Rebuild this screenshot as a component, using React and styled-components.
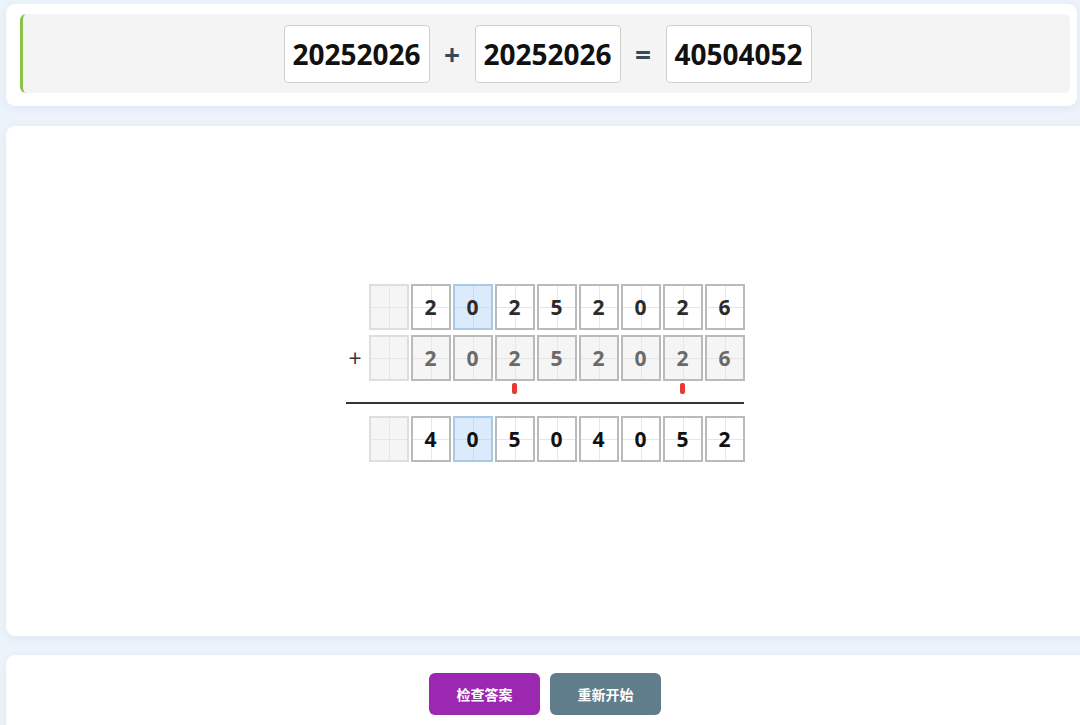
import React from "react";
import styled, { createGlobalStyle } from "styled-components";

const Global = createGlobalStyle`
  html, body { margin: 0; padding: 0; background: #edf3fb; }
  body { font-family: "Open Sans", "Noto Sans CJK SC", sans-serif; overflow: hidden; }
`;

const Page = styled.div`
  width: 1080px;
  height: 725px;
  overflow: hidden;
  padding: 4px 0 0 6px;
  box-sizing: border-box;
  display: flex;
  flex-direction: column;
`;

const Card = styled.section`
  background: #fff;
  border-radius: 9px;
  box-shadow: 0 2px 8px rgba(40, 70, 120, 0.07);
  box-sizing: border-box;
  flex-shrink: 0;
`;

const HeaderCard = styled(Card)`
  width: 1071px;
  padding: 10px 7px 13px 14px;
`;

const EquationPanel = styled.div`
  height: 79px;
  background: #f4f4f4;
  border-left: 3px solid #8bc34a;
  border-radius: 6px;
  display: flex;
  align-items: center;
  justify-content: center;
  gap: 13px;
  padding-left: 2px;
  box-sizing: border-box;
`;

const NumberBox = styled.div`
  width: 146px;
  height: 58px;
  box-sizing: border-box;
  background: #fff;
  border: 1px solid #cfcfcf;
  border-radius: 4px;
  display: flex;
  align-items: center;
  justify-content: center;
  font-size: 28px;
  font-weight: 700;
  color: #111;
`;

const Operator = styled.span`
  width: 19px;
  text-align: center;
  font-size: 28px;
  font-weight: 700;
  color: #34495e;
`;

const WorkCard = styled(Card)`
  margin-top: 20px;
  width: 1090px;
  height: 510px;
  display: flex;
  align-items: center;
  justify-content: center;
  padding: 0 12px 16px 0;
`;

const Vertical = styled.div`
  display: flex;
  flex-direction: column;
  align-items: flex-start;
`;

const Row = styled.div`
  display: flex;
  align-items: center;
  margin-top: ${(p) => p.$mt || 0}px;
`;

const Sign = styled.div`
  width: 23px;
  text-align: center;
  font-size: 23px;
  color: #333;
  padding-right: 4px;
  box-sizing: border-box;
`;

const Cells = styled.div`
  display: flex;
  gap: 2px;
`;

const Cell = styled.div`
  position: relative;
  width: 40px;
  height: 46px;
  box-sizing: border-box;
  border: 2px solid ${(p) => (p.$empty ? "#dedede" : p.$hl ? "#a9c9e6" : "#bababa")};
  background: ${(p) => (p.$hl ? "#dcebfb" : p.$shade ? "#f5f5f5" : "#fff")};
  display: flex;
  align-items: center;
  justify-content: center;
  font-size: 21px;
  font-weight: 700;
  color: ${(p) => p.$tone};
  &::before {
    content: "";
    position: absolute;
    left: 50%;
    top: 0;
    bottom: 0;
    width: 1px;
    background: ${(p) => (p.$hl ? "#c8dcf0" : "#e6e6e6")};
  }
  &::after {
    content: "";
    position: absolute;
    top: 50%;
    left: 0;
    right: 0;
    height: 1px;
    background: ${(p) => (p.$hl ? "#c8dcf0" : "#e6e6e6")};
  }
`;

const Digit = styled.span`
  position: relative;
  z-index: 1;
`;

const CarrySlot = styled.div`
  width: 40px;
  height: 14px;
  display: flex;
  justify-content: center;
  padding-top: 2px;
  box-sizing: border-box;
`;

const CarryMark = styled.div`
  width: 5px;
  height: 11px;
  border-radius: 2px;
  background: #e53935;
`;

const Rule = styled.div`
  width: 398px;
  height: 2px;
  background: #333;
  margin-top: 7px;
`;

const ActionCard = styled(Card)`
  margin-top: 19px;
  width: 1090px;
  height: 90px;
  display: flex;
  justify-content: center;
  gap: 10px;
  padding: 18px 12px 0 0;
`;

const Button = styled.button`
  width: 111px;
  height: 42px;
  border: none;
  border-radius: 6px;
  background: ${(p) => p.$bg};
  color: #fff;
  font-family: "Noto Sans CJK SC", sans-serif;
  font-size: 14px;
  font-weight: 700;
  cursor: pointer;
`;

const rows = [
  { sign: "", digits: "20252026", shade: false, tone: "#2b2b2b", hl: 1 },
  { sign: "+", digits: "20252026", shade: true, tone: "#6a6a6a", hl: -1 },
];
const result = { digits: "40504052", tone: "#111", hl: 1 };
const carries = [2, 6];

function DigitRow({ sign, digits, shade, tone, hl, mt }) {
  return (
    <Row $mt={mt}>
      <Sign>{sign}</Sign>
      <Cells>
        <Cell $empty $shade />
        {digits.split("").map((d, i) => (
          <Cell key={i} $shade={shade} $hl={i === hl} $tone={tone}>
            <Digit>{d}</Digit>
          </Cell>
        ))}
      </Cells>
    </Row>
  );
}

export default function App() {
  return (
    <>
      <Global />
      <Page>
        <HeaderCard>
          <EquationPanel>
            <NumberBox>20252026</NumberBox>
            <Operator>+</Operator>
            <NumberBox>20252026</NumberBox>
            <Operator>=</Operator>
            <NumberBox>40504052</NumberBox>
          </EquationPanel>
        </HeaderCard>
        <WorkCard>
          <Vertical>
            <DigitRow {...rows[0]} />
            <DigitRow {...rows[1]} mt={5} />
            <Row>
              <Sign />
              <Cells>
                <CarrySlot />
                {Array.from({ length: 8 }).map((_, i) => (
                  <CarrySlot key={i}>{carries.includes(i) && <CarryMark />}</CarrySlot>
                ))}
              </Cells>
            </Row>
            <Rule />
            <DigitRow sign="" digits={result.digits} tone={result.tone} hl={result.hl} mt={12} />
          </Vertical>
        </WorkCard>
        <ActionCard>
          <Button $bg="#9c27b0">检查答案</Button>
          <Button $bg="#607d8b">重新开始</Button>
        </ActionCard>
      </Page>
    </>
  );
}
